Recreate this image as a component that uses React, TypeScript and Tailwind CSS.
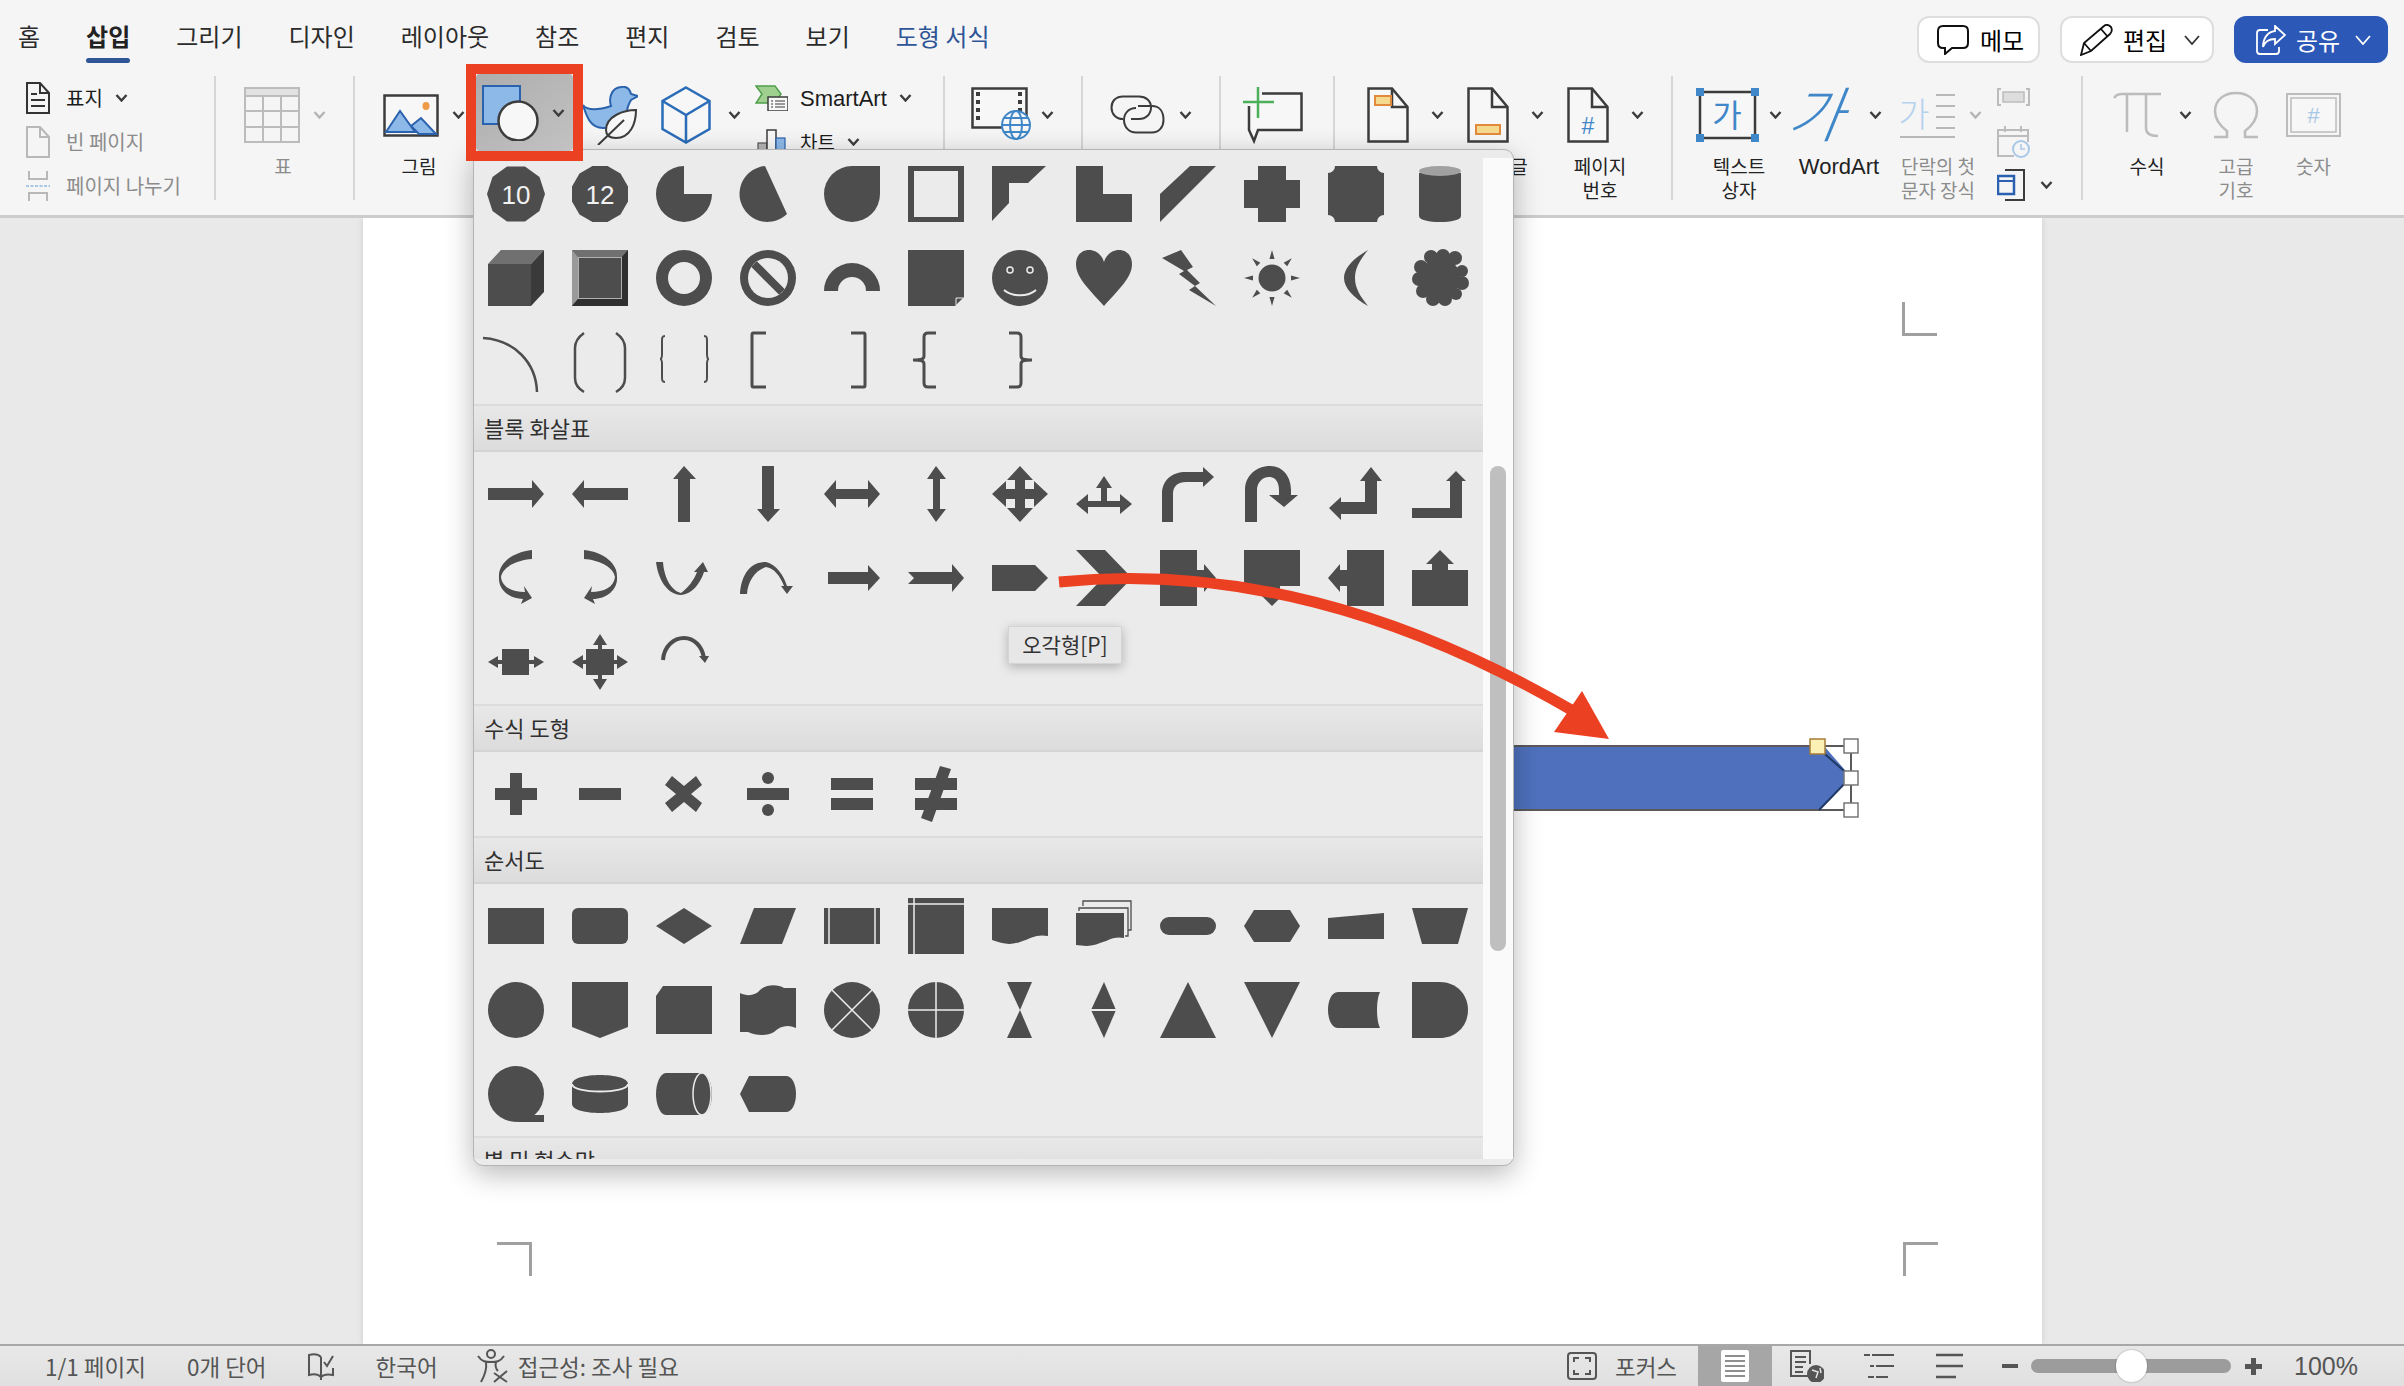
import React from "react";

const BG = "#ebebeb";

const ngon = (n: number) =>
  Array.from({ length: n }, (_, i) => {
    const a = ((i * 360) / n - 90 + 180 / n) * (Math.PI / 180);
    return `${(28 + 29 * Math.cos(a)).toFixed(1)},${(28 + 29 * Math.sin(a)).toFixed(1)}`;
  }).join(" ");

const P = ({ d }: { d: string }) => <path d={d} />;
const S = ({ d, w = 2.5 }: { d: string; w?: number }) => (
  <path d={d} fill="none" stroke="#4d4d4d" strokeWidth={w} />
);
const Num = ({ n, t }: { n: number; t: string }) => (
  <>
    <polygon points={ngon(n)} />
    <text x="28" y="38" textAnchor="middle" fontSize="26" fill="#f2f2f2" fontFamily="'Liberation Sans',sans-serif">
      {t}
    </text>
  </>
);

const basicShapes: React.ReactNode[] = [
  <Num n={10} t="10" />,
  <Num n={12} t="12" />,
  <P d="M28 0A28 28 0 1 0 56 28H28Z" />,
  <P d="M25 0A28 28 0 1 0 47 48Z" />,
  <P d="M28 0H56V28A28 28 0 1 1 28 0Z" />,
  <path fillRule="evenodd" d="M0 0H56V56H0ZM6 5V51H50V5Z" />,
  <P d="M0 0H54L36 17H17V37L0 55Z" />,
  <P d="M0 0H27V28H56V56H0Z" />,
  <P d="M30 0H56L0 56V28Z" />,
  <P d="M14 0H42V14H56V42H42V56H14V42H0V14H14Z" />,
  <P d="M7 0H49A7 7 0 0 0 56 7V49A7 7 0 0 0 49 56H7A7 7 0 0 0 0 49V7A7 7 0 0 0 7 0Z" />,
  <>
    <P d="M7 7V50C7 58 49 58 49 50V7Z" />
    <ellipse cx="28" cy="5" rx="21" ry="5" fill="#a0a0a0" />
  </>,

  <>
    <path d="M0 14H43V56H0Z" />
    <path d="M0 14L13 0H56L43 14Z" fill="#707070" />
    <path d="M43 14L56 0V42L43 56Z" fill="#3a3a3a" />
  </>,
  <>
    <rect width="56" height="56" />
    <path d="M0 0H56L50 7H6Z" fill="#707070" />
    <path d="M0 0L6 7V49L0 56Z" fill="#9a9a9a" />
    <path d="M56 0L50 7V49L56 56Z" fill="#2f2f2f" />
    <path d="M0 56L6 49H50L56 56Z" fill="#2f2f2f" />
    <rect x="6.5" y="7.5" width="43" height="41" fill="none" stroke="#b0b0b0" />
  </>,
  <path fillRule="evenodd" d="M0 28A28 28 0 1 1 56 28A28 28 0 1 1 0 28ZM12 28A16 16 0 1 0 44 28A16 16 0 1 0 12 28Z" />,
  <>
    <circle cx="28" cy="28" r="28" />
    <circle cx="28" cy="28" r="20" fill={BG} />
    <path d="M14 14L42 42" stroke="#4d4d4d" strokeWidth="8" />
  </>,
  <P d="M0 41A28 28 0 0 1 56 41H42A14 14 0 0 0 14 41Z" />,
  <>
    <path d="M0 0H56V47L47 56H0Z" />
    <path d="M48 55V48H55" fill="none" stroke={BG} strokeWidth="1" />
  </>,
  <>
    <circle cx="28" cy="28" r="28" />
    <circle cx="18" cy="20" r="3" fill="none" stroke={BG} strokeWidth="1.5" />
    <circle cx="38" cy="20" r="3" fill="none" stroke={BG} strokeWidth="1.5" />
    <path d="M12 40C20 47 36 47 44 40" fill="none" stroke={BG} strokeWidth="2" />
  </>,
  <P d="M28 56C14 40 0 28 0 14C0 5 6 0 13 0C20 0 26 5 28 12C30 5 36 0 43 0C50 0 56 5 56 14C56 28 42 40 28 56Z" />,
  <P d="M21 0L33 17L27 20L40 33L35 36L56 56L29 40L35 36L19 24L24 21L2 8Z" />,
  <>
    <circle cx="28" cy="28" r="13.5" />
    {Array.from({ length: 8 }, (_, i) => (
      <path key={i} d="M25.5 9L28 0L30.5 9Z" transform={`rotate(${i * 45} 28 28)`} />
    ))}
  </>,
  <P d="M40 0C26 8 16 18 16 28C16 38 26 48 40 56C32 46 27 38 27 28C27 18 32 10 40 0Z" />,
  <>
    {[
      [19, 7, 7],
      [31, 6, 7],
      [43, 8, 7],
      [50, 21, 6],
      [50, 33, 7],
      [44, 44, 6],
      [33, 49, 7],
      [21, 49, 7],
      [11, 41, 7],
      [7, 29, 7],
      [9, 17, 7],
      [28, 28, 20],
    ].map(([x, y, r], i) => (
      <circle key={i} cx={x} cy={y} r={r} />
    ))}
  </>,

  <S d="M-5 4C26 6 48 28 49 58" w={2.5} />,
  <S d="M12 -1C5 4 3 10 3 14V44C3 48 5 54 12 58M44 -1C51 4 53 10 53 14V44C53 48 51 54 44 58" />,
  <S d="M9 2C6 2 6 4 6 7V20C6 24 5 25 4 25C5 25 6 26 6 30V43C6 46 6 48 9 48M48 2C51 2 51 4 51 7V20C51 24 52 25 53 25C52 25 51 26 51 30V43C51 46 51 48 48 48" w={2} />,
  <S d="M26 -1H13C12 -1 12 0 12 1V51C12 52 12 53 13 53H26" w={3} />,
  <S d="M27 -1H40C41 -1 41 0 41 1V51C41 52 41 53 40 53H27" w={3} />,
  <S d="M28 -1H20C17 -1 16 1 16 3V22C16 25 14 26 5 26C14 26 16 27 16 30V49C16 51 17 53 20 53H28" w={3} />,
  <S d="M17 -1H25C28 -1 29 1 29 3V22C29 25 31 26 40 26C31 26 29 27 29 30V49C29 51 28 53 25 53H17" w={3} />,
];

const bulge = "M44 0V9C30 10 15 16 13 27C14 37 24 42 37 42L36 36L44 48L33 54L35 49C22 49 10 40 11 27C10 14 24 2 44 0Z";

const arrowShapes: React.ReactNode[] = [
  <P d="M0 22H44V14L56 28L44 42V34H0Z" />,
  <P d="M56 22H12V14L0 28L12 42V34H56Z" />,
  <P d="M22 56V13H17L28 0L40 13H34V56Z" />,
  <P d="M22 0H34V43H40L28 56L17 43H22Z" />,
  <P d="M0 28L12 14V23H44V14L56 28L44 42V33H12V42Z" />,
  <P d="M28 0L38 13H32V43H38L28 56L19 43H25V13H19Z" />,
  <P d="M28 0L41 14H33V23H42V15L56 28L42 41V33H33V42H41L28 56L15 42H23V33H14V41L0 28L14 15V23H23V14H15Z" />,
  <P d="M28 10L36 22H31V35H44V28L56 38L44 48V41H12V48L0 38L12 28V35H25V22H20Z" />,
  <P d="M2 56V28C2 14 12 6 26 6H43V1L54 11L43 21V16H26C18 16 13 20 13 28V56Z" />,
  <P d="M1 56V24C1 10 12 0 26 0C40 0 47 12 47 24V29H54L40 41L25 29H35V24C35 17 32 11 25 11C18 11 13 17 13 24V56Z" />,
  <P d="M43 1L54 15H49V48H13V54L1 42L13 31V36H37V15H32Z" />,
  <P d="M0 42H38V15H34L44 5L54 15H50V52H0Z" />,

  <P d={bulge} />,
  <g transform="matrix(-1 0 0 1 56 0)">
    <P d={bulge} />
  </g>,
  <P d="M0 12H7C8 26 14 40 25 43C32 38 38 30 41 22H38L47 12L52 22H48C44 34 36 44 25 45C10 44 2 28 0 12Z" />,
  <P d="M0 44C1 28 8 12 26 12C36 14 44 26 47 36H53L47 44L41 36H44C40 26 34 18 26 17C16 20 8 30 7 44Z" />,
  <P d="M4 22H44V15L56 28L44 41V34H4Z" />,
  <P d="M0 22H44V14L56 28L44 42V34H0L6 28Z" />,
  <P d="M0 15H43L56 28L43 41H0Z" />,
  <P d="M0 0H29L56 28L29 56H0L27 28Z" />,
  <P d="M0 0H37V20H44V14L56 28L44 42V36H37V56H0Z" />,
  <P d="M0 0H56V36H36V42H42L28 56L14 42H20V36H0Z" />,
  <P d="M56 0V56H19V36H12V42L0 28L12 14V20H19V0Z" />,
  <P d="M0 56V20H20V14H14L28 0L42 14H36V20H56V56Z" />,

  <P d="M14 15H41V26H46V22L56 28L46 34V30H41V41H14V30H10V34L0 28L10 22V26H14Z" />,
  <>
    <rect x="14" y="15" width="28" height="26" />
    {[0, 90, 180, 270].map((r) => (
      <path key={r} d="M28 0L35 11H30V15H26V11H21Z" transform={`rotate(${r} 28 28)`} />
    ))}
  </>,
  <>
    <S d="M7 26C8 12 18 4 28 4C38 4 46 12 48 24" w={4} />
    <path d="M43 22H53L49 29Z" />
  </>,
];

const mathShapes: React.ReactNode[] = [
  <P d="M22 7H34V22H49V34H34V49H22V34H7V22H22Z" />,
  <P d="M7 22H49V34H7Z" />,
  <P d="M9 19L16 10L28 20L40 10L46 19L35 28L46 37L40 46L28 36L16 46L9 37L20 28Z" />,
  <>
    <rect x="7" y="22" width="42" height="12" />
    <ellipse cx="28" cy="12" rx="6" ry="6" />
    <ellipse cx="28" cy="44" rx="6" ry="6" />
  </>,
  <P d="M7 12H49V24H7ZM7 32H49V44H7Z" />,
  <P d="M7 12H49V24H7ZM7 32H49V44H7ZM32 0L43 3L24 56L13 52Z" />,
];

const flowShapes: React.ReactNode[] = [
  <rect y="10" width="56" height="36" />,
  <rect y="10" width="56" height="36" rx="6" />,
  <P d="M28 10L56 28L28 46L0 28Z" />,
  <P d="M14 10H56L42 46H0Z" />,
  <>
    <rect y="10" width="56" height="36" />
    <path d="M5 10V46M51 10V46" stroke={BG} strokeWidth="1.5" />
  </>,
  <>
    <rect width="56" height="56" />
    <path d="M6 0V56M0 6H56" stroke={BG} strokeWidth="1.5" />
  </>,
  <P d="M0 10H56V38C44 36 40 40 28 44C16 48 10 45 0 42Z" />,
  <>
    <P d="M0 15H48V40C38 38 34 42 24 45C14 49 8 48 0 47Z" />
    <S d="M3 13V10H52V38H49M7 8V3H55V32H52" w={1.3} />
  </>,
  <rect y="19" width="56" height="18" rx="9" />,
  <P d="M10 12H46L56 28L46 44H10L0 28Z" />,
  <P d="M0 20L56 15V41H0Z" />,
  <P d="M0 10H56L46 46H10Z" />,

  <circle cx="28" cy="28" r="28" />,
  <P d="M0 0H56V45L28 56L0 45Z" />,
  <P d="M7 4H56V52H0V14Z" />,
  <P d="M0 11C8 15 16 13 20 8C26 2 38 2 44 6L56 6V46C48 42 40 44 34 50C28 54 16 54 8 50L0 50Z" />,
  <>
    <circle cx="28" cy="28" r="28" />
    <path d="M8 8L48 48M48 8L8 48" stroke={BG} strokeWidth="1.5" />
  </>,
  <>
    <circle cx="28" cy="28" r="28" />
    <path d="M28 0V56M0 28H56" stroke={BG} strokeWidth="1.5" />
  </>,
  <P d="M15 0H40L28 28L40 56H15L28 28Z" />,
  <>
    <path d="M28 0L40 28L28 56L15 28Z" />
    <rect x="12" y="27" width="32" height="2" fill={BG} />
  </>,
  <P d="M28 0L56 56H0Z" />,
  <P d="M0 0H56L28 56Z" />,
  <P d="M10 10H52C48 18 48 38 52 46H10C3 46 0 36 0 28C0 20 3 10 10 10Z" />,
  <P d="M0 0H28C44 0 56 12 56 28C56 44 44 56 28 56H0Z" />,

  <>
    <circle cx="28" cy="28" r="28" />
    <rect x="30" y="49" width="26" height="7" />
  </>,
  <>
    <P d="M0 18C0 6 56 6 56 18V38C56 50 0 50 0 38Z" />
    <path d="M0 18C0 28 56 28 56 18" fill="none" stroke={BG} strokeWidth="2" />
  </>,
  <>
    <P d="M10 7H46C52 7 56 18 56 28C56 38 52 49 46 49H10C4 49 0 38 0 28C0 18 4 7 10 7Z" />
    <ellipse cx="46" cy="28" rx="9" ry="21" fill="none" stroke={BG} strokeWidth="1.5" />
  </>,
  <P d="M9 10H46C52 10 56 18 56 28C56 38 52 46 46 46H9L0 28Z" />,
];

const ShapeGrid = ({ items }: { items: React.ReactNode[] }) => (
  <div className="grid grid-cols-[repeat(12,84px)] auto-rows-[84px]">
    {items.map((s, i) => (
      <div key={i} className="flex items-center justify-center">
        <svg viewBox="0 0 56 56" fill="#4d4d4d" className="h-[56px] w-[56px] overflow-visible">
          {s}
        </svg>
      </div>
    ))}
  </div>
);

const SectionHead = ({ title }: { title: string }) => (
  <div className="flex h-[48px] items-center border-y-2 border-t-[#dcdcdc] border-b-[#d4d4d4] bg-gradient-to-b from-[#e8e8e8] to-[#dcdcdc] pb-[3px] pl-[10px] text-[22px] leading-none text-[#303030]">
    {title}
  </div>
);

const Chevron = ({ className = "", color = "#3c3c3c" }: { className?: string; color?: string }) => (
  <svg viewBox="0 0 13 8" className={`h-[8px] w-[13px] shrink-0 ${className}`} fill="none" stroke={color} strokeWidth="2.4">
    <path d="M1.5 1L6.5 6.5L11.5 1" />
  </svg>
);

const ThinChevron = ({ className = "", color = "#333333" }: { className?: string; color?: string }) => (
  <svg viewBox="0 0 16 10" className={`h-[10px] w-[16px] shrink-0 ${className}`} fill="none" stroke={color} strokeWidth="1.8">
    <path d="M1 1L8 9L15 1" />
  </svg>
);

const Sep = () => <div className="mt-[11px] h-[124px] w-[2px] shrink-0 bg-[#d6d6d6]" />;

const Tool = ({
  className = "",
  lines = [],
  muted = false,
  latin = false,
  children,
}: {
  className?: string;
  lines?: string[];
  muted?: boolean;
  latin?: boolean;
  children: React.ReactNode;
}) => (
  <div className={`shrink-0 pt-[10px] ${className}`}>
    <div className="flex h-[80px] items-center">{children}</div>
    <div
      className={`whitespace-nowrap text-center leading-[24px] ${latin ? "font-['Liberation_Sans',sans-serif] text-[22px]" : "-mt-[1px] text-[19px]"} ${muted ? "text-[#8c8c8c]" : "text-[#222222]"}`}
    >
      {lines.map((l) => (
        <div key={l}>{l}</div>
      ))}
    </div>
  </div>
);

const ListRow = ({ icon, label, muted, chevron }: { icon: React.ReactNode; label: string; muted?: boolean; chevron?: boolean }) => (
  <div className="flex h-[44px] items-center pl-[26px]">
    <div className="w-[24px]">{icon}</div>
    <span className={`ml-[16px] text-[20px] ${muted ? "text-[#8c8c8c]" : "text-[#1c1c1c]"}`}>{label}</span>
    {chevron && <Chevron className="ml-[12px]" />}
  </div>
);

const Tabs = ["홈", "삽입", "그리기", "디자인", "레이아웃", "참조", "편지", "검토", "보기", "도형 서식"];

const TopBar = () => (
  <div className="flex h-[65px] shrink-0">
    <div className="flex gap-[46px] pl-[18px]">
      {Tabs.map((t) => (
        <div key={t} className="pt-[20px]">
          <div
            className={`whitespace-nowrap text-[24px] leading-[32px] ${t === "삽입" ? "font-bold text-[#222222]" : t === "도형 서식" ? "text-[#2f5597]" : "text-[#2b2b2b]"}`}
          >
            {t}
          </div>
          {t === "삽입" && <div className="mt-[6px] h-[5px] rounded-full bg-[#2f5597]" />}
        </div>
      ))}
    </div>
    <div className="ml-auto flex items-start gap-[20px] pr-[16px] pt-[16px] text-[24px] leading-none">
      <div className="flex h-[47px] w-[123px] items-center rounded-[12px] border-2 border-[#dedede] bg-white pl-[18px] text-black">
        <svg viewBox="0 0 32 30" className="h-[30px] w-[32px]" fill="none" stroke="#111" strokeWidth="2">
          <path d="M6 1H26C29 1 31 3 31 6V18C31 21 29 23 26 23H15L8 29V23H6C3 23 1 21 1 18V6C1 3 3 1 6 1Z" />
        </svg>
        <span className="ml-[11px]">메모</span>
      </div>
      <div className="flex h-[47px] w-[154px] items-center rounded-[12px] border-2 border-[#dedede] bg-white pl-[18px] text-black">
        <svg viewBox="0 0 33 32" className="h-[32px] w-[33px]" fill="none" stroke="#111" strokeWidth="1.8">
          <path d="M1 31L4 19L24 2C26 0 29 1 31 3C32 5 32 8 30 10L11 27ZM4 19L11 27M21 5L28 13" />
        </svg>
        <span className="ml-[10px]">편집</span>
        <ThinChevron className="ml-[17px]" />
      </div>
      <div className="flex h-[47px] w-[154px] items-center rounded-[12px] bg-[#2c58b7] pl-[22px] text-white">
        <svg viewBox="0 0 30 30" className="h-[30px] w-[30px]" fill="none" stroke="#fff" strokeWidth="1.8">
          <path d="M12 5H4C2 5 1 6 1 8V26C1 28 2 29 4 29H20C22 29 23 28 23 26V22M19 1L29 10L19 19V14C13 14 9 16 7 22C7 14 11 7 19 6Z" />
        </svg>
        <span className="ml-[10px]">공유</span>
        <ThinChevron className="ml-[15px]" color="#ffffff" />
      </div>
    </div>
  </div>
);

const DocIcon = ({ stroke = "#3c3c3c", children }: { stroke?: string; children?: React.ReactNode }) => (
  <svg viewBox="0 0 42 56" className="h-[56px] w-[42px] shrink-0" fill="#f7f7f7" stroke={stroke} strokeWidth="2.5">
    <path d="M1.5 1.5H25L40.5 20V54.5H1.5Z" />
    <path d="M25 1.5V20H40.5" fill="none" />
    {children}
  </svg>
);

const Ribbon = () => (
  <div className="flex h-[153px] shrink-0 border-b-[3px] border-[#cccccc]">
    {/* Pages */}
    <div className="w-[214px] shrink-0 pt-[11px]">
      <ListRow
        chevron
        label="표지"
        icon={
          <svg viewBox="0 0 24 32" className="h-[32px] w-[24px]" fill="none" stroke="#333" strokeWidth="2">
            <path d="M1 1H14L23 11V31H1ZM14 1V11H23M5 12H11M5 18H19M5 24H19" />
          </svg>
        }
      />
      <ListRow
        muted
        label="빈 페이지"
        icon={
          <svg viewBox="0 0 24 32" className="h-[32px] w-[24px]" fill="none" stroke="#b8b8b8" strokeWidth="2">
            <path d="M1 1H14L23 11V31H1ZM14 1V11H23" />
          </svg>
        }
      />
      <ListRow
        muted
        label="페이지 나누기"
        icon={
          <svg viewBox="0 0 24 30" className="h-[30px] w-[24px]" fill="none" stroke="#b8b8b8" strokeWidth="2">
            <path d="M3 0V8H21V0M3 30V22H21V30" />
            <path d="M0 15H24" stroke="#a9c8e8" strokeDasharray="3 1.5" />
          </svg>
        }
      />
    </div>
    <Sep />
    {/* Table */}
    <div className="w-[137px] shrink-0">
      <Tool className="ml-[28px] w-[78px]" lines={["표"]} muted>
        <svg viewBox="0 0 56 56" className="h-[56px] w-[56px] shrink-0" fill="none" stroke="#bcbcbc" strokeWidth="2">
          <rect x="1" y="1" width="54" height="54" />
          <rect x="1" y="1" width="54" height="8" fill="#e2e2e2" />
          <path d="M1 24H55M1 40H55M19 9V55M37 9V55" />
        </svg>
        <Chevron className="ml-[13px]" color="#b5b5b5" />
      </Tool>
    </div>
    <Sep />
    {/* Illustrations */}
    <div className="flex w-[588px] shrink-0">
      <Tool className="ml-[20px] w-[88px]" lines={["그림"]}>
        <svg viewBox="0 0 56 43" className="ml-[8px] h-[43px] w-[56px] shrink-0">
          <rect x="1.5" y="1.5" width="53" height="40" fill="#f7f7f7" stroke="#3c3c3c" strokeWidth="2.5" />
          <path d="M3 38L17 17L32 38ZM28 32L38 24L53 40H36Z" fill="#8db9e8" stroke="#2b62ad" strokeWidth="2" />
          <ellipse cx="43" cy="12" rx="3.5" ry="4" fill="#ee9a45" />
        </svg>
        <Chevron className="ml-[13px]" />
      </Tool>
      <Tool className="ml-[19px]">
        <div className="h-[56px] w-[57px] shrink-0" />
        <div className="ml-[13px] w-[13px]" />
      </Tool>
      <Tool className="ml-[18px]">
        <svg viewBox="0 0 55 59" className="h-[59px] w-[55px] shrink-0">
          <path
            d="M28 20C26 14 27 2 38 1C44 0 47 4 48 8L55 10L48 14C46 18 44 20 44 26C44 36 34 42 20 42C8 42 4 32 0 19C4 25 16 24 28 20Z"
            fill="#8db9e8"
            stroke="#2b62ad"
            strokeWidth="2"
          />
          <path d="M53 24C41 24 23 30 23 44C23 50 27 52 33 52C47 52 53 38 53 24Z" fill="#f7f7f7" stroke="#3c3c3c" strokeWidth="2" />
          <path d="M15 59L41 34" stroke="#3c3c3c" strokeWidth="2" />
        </svg>
      </Tool>
      <Tool className="ml-[23px]">
        <svg viewBox="0 0 50 58" className="h-[58px] w-[50px] shrink-0" fill="#f7f7f7" stroke="#2b6cb8" strokeWidth="2.5">
          <path d="M25 1.5L48.5 15V43L25 56.5L1.5 43V15Z" />
          <path d="M1.5 15L25 29L48.5 15M25 29V56.5" fill="none" />
        </svg>
        <Chevron className="ml-[17px]" />
      </Tool>
      <div className="ml-[14px] shrink-0 pt-[11px]">
        <div className="flex h-[44px] items-center">
          <svg viewBox="0 0 33 26" className="h-[26px] w-[33px] shrink-0">
            <path d="M1 1H20L26 9L20 18H1L7 9Z" fill="#9fd08f" stroke="#4f9e4a" strokeWidth="1.5" />
            <rect x="13" y="12" width="20" height="14" fill="#f7f7f7" stroke="#3c3c3c" strokeWidth="1.5" />
            <path d="M16 16H18M20 16H30M16 19H18M20 19H30M16 22H18M20 22H30" stroke="#3c3c3c" strokeWidth="1.2" />
          </svg>
          <span className="ml-[12px] font-['Liberation_Sans',sans-serif] text-[22px] text-[#1c1c1c]">SmartArt</span>
          <Chevron className="ml-[12px]" />
        </div>
        <div className="flex h-[44px] items-center">
          <svg viewBox="0 0 29 26" className="ml-[2px] h-[26px] w-[29px] shrink-0">
            <rect x="1" y="14" width="9" height="12" fill="#b5b5b5" stroke="#555" strokeWidth="1.2" />
            <rect x="10" y="1" width="9" height="25" fill="#f7f7f7" stroke="#3c3c3c" strokeWidth="1.5" />
            <rect x="19" y="9" width="9" height="17" fill="#8db9e8" stroke="#2b62ad" strokeWidth="1.2" />
          </svg>
          <span className="ml-[14px] text-[19px] text-[#1c1c1c]">차트</span>
          <Chevron className="ml-[12px]" />
        </div>
      </div>
    </div>
    <Sep />
    {/* Media */}
    <div className="flex w-[136px] shrink-0">
      <Tool className="ml-[26px]">
        <svg viewBox="0 0 60 56" className="h-[56px] w-[60px] shrink-0">
          <rect x="1.5" y="1.5" width="54" height="39" fill="#f7f7f7" stroke="#3c3c3c" strokeWidth="2.5" />
          <path d="M7 5V37M49 5V37" stroke="#3c3c3c" strokeWidth="4" strokeDasharray="4 4" />
          <circle cx="45" cy="38" r="14" fill="#f7f7f7" stroke="#3f87c8" strokeWidth="2" />
          <ellipse cx="45" cy="38" rx="6" ry="14" fill="none" stroke="#3f87c8" strokeWidth="2" />
          <path d="M31 38H59M33 31H57M33 45H57" stroke="#3f87c8" strokeWidth="2" />
        </svg>
        <Chevron className="ml-[9.5px]" />
      </Tool>
    </div>
    <Sep />
    {/* Links */}
    <div className="flex w-[136px] shrink-0">
      <Tool className="ml-[27px]">
        <svg viewBox="0 0 55 40" className="h-[40px] w-[55px] shrink-0" fill="none" stroke="#3c3c3c" strokeWidth="2">
          <path d="M13 24C6 24 1.5 19 1.5 12.5C1.5 6 6 1.5 13 1.5H29C36 1.5 41 6 41 12.5C41 19 36 24 29 24H21" />
          <path d="M28 12H42C49 12 53.5 17 53.5 26C53.5 33 49 38.5 42 38.5H26C19 38.5 14 33 14 26C14 19 19 14 26 14" transform="translate(0 -1)" />
        </svg>
        <Chevron className="ml-[13.5px]" />
      </Tool>
    </div>
    <Sep />
    {/* Comment */}
    <div className="flex w-[112px] shrink-0">
      <Tool className="ml-[22px]">
        <svg viewBox="0 0 60 57" className="h-[57px] w-[60px] shrink-0">
          <path d="M6 6.5H58.5V43H15L11 54L6 43Z" fill="#f7f7f7" />
          <path d="M19 6.5H58.5V43H15L11 54L6 43V19" fill="none" stroke="#3c3c3c" strokeWidth="2.5" />
          <path d="M15 0V31M0 15H31" stroke="#4caf5a" strokeWidth="2.5" />
        </svg>
      </Tool>
    </div>
    <Sep />
    {/* Header and footer */}
    <div className="flex w-[336px] shrink-0">
      <Tool className="ml-[32px] w-[77px]" lines={["머리글"]}>
        <DocIcon>
          <rect x="8" y="9" width="16" height="9" fill="#f4d98f" stroke="#e28a3c" strokeWidth="2" />
        </DocIcon>
        <Chevron className="ml-[21.5px]" />
      </Tool>
      <Tool className="ml-[15px] w-[85px]" lines={["바닥글"]}>
        <div className="ml-[8px]">
          <DocIcon>
            <rect x="9" y="38" width="24" height="9" fill="#f4d98f" stroke="#e28a3c" strokeWidth="2" />
          </DocIcon>
        </div>
        <Chevron className="ml-[21.5px]" />
      </Tool>
      <Tool className="ml-[16px] w-[80px]" lines={["페이지", "번호"]}>
        <div className="ml-[7px]">
          <DocIcon>
            <text x="21" y="47" textAnchor="middle" fontSize="23" fill="#3f87c8" stroke="none" fontFamily="'Liberation Sans',sans-serif">
              #
            </text>
          </DocIcon>
        </div>
        <Chevron className="ml-[21.5px]" />
      </Tool>
    </div>
    <Sep />
    {/* Text */}
    <div className="flex w-[408px] shrink-0">
      <Tool className="ml-[23px] w-[86px]" lines={["텍스트", "상자"]}>
        <svg viewBox="0 0 63 54" className="h-[54px] w-[63px] shrink-0">
          <rect x="4" y="4" width="55" height="46" fill="#f7f7f7" stroke="#3c3c3c" strokeWidth="2.5" />
          <text x="31" y="39" textAnchor="middle" fontSize="32" fill="#3f87c8">
            가
          </text>
          <path d="M0 0H8V8H0ZM55 0H63V8H55ZM0 46H8V54H0ZM55 46H63V54H55Z" fill="#3f87c8" />
        </svg>
        <Chevron className="ml-[9.5px]" />
      </Tool>
      <Tool className="ml-[16px] w-[82px]" lines={["WordArt"]} latin>
        <svg viewBox="0 0 51 56" className="ml-[5px] h-[56px] w-[51px] shrink-0 overflow-visible">
          <text x="16" y="50" textAnchor="middle" fontSize="60" fontWeight="300" fill="#3f87c8" transform="skewX(-22) translate(14 0)">
            가
          </text>
        </svg>
        <Chevron className="ml-[14.5px]" />
      </Tool>
      <Tool className="ml-[14px] w-[88px]" lines={["단락의 첫", "문자 장식"]} muted>
        <svg viewBox="0 0 56 48" className="ml-[5px] h-[48px] w-[56px] shrink-0 overflow-visible">
          <text x="15" y="36" textAnchor="middle" fontSize="34" fontWeight="300" fill="#b5d2ee">
            가
          </text>
          <path d="M37 4H56M37 15H56M37 26H56M37 37H56M1 46H56" stroke="#b8b8b8" strokeWidth="2" />
        </svg>
        <Chevron className="ml-[13.5px]" color="#b5b5b5" />
      </Tool>
      <div className="ml-[15px] shrink-0 pt-[10px]">
        <div className="flex h-[44px] items-center">
          <svg viewBox="0 0 33 18" className="h-[18px] w-[33px]">
            <path d="M4 1H1V17H4M29 1H32V17H29" fill="none" stroke="#bcbcbc" strokeWidth="2" />
            <rect x="6" y="4" width="21" height="10" fill="#dddddd" stroke="#bcbcbc" strokeWidth="1.5" />
          </svg>
        </div>
        <div className="flex h-[44px] items-center">
          <svg viewBox="0 0 33 33" className="h-[33px] w-[33px]" fill="none" stroke="#bcbcbc" strokeWidth="2">
            <path d="M17 31H1V5H31V17M1 11H31M8 1V7M24 1V7" />
            <circle cx="24" cy="24" r="8" fill="#f5f5f5" stroke="#a9c8e8" />
            <path d="M24 19V24H28" stroke="#a9c8e8" strokeWidth="1.5" />
          </svg>
        </div>
        <div className="flex h-[44px] items-center">
          <svg viewBox="0 0 28 32" className="h-[32px] w-[28px] shrink-0">
            <path d="M8 1H27V31H8" fill="none" stroke="#3c3c3c" strokeWidth="2" />
            <rect x="1" y="7" width="16" height="18" fill="#f5f5f5" stroke="#2b5fb0" strokeWidth="2.5" />
            <path d="M1 12H17" stroke="#2b5fb0" strokeWidth="2" />
          </svg>
          <Chevron className="ml-[15px]" />
        </div>
      </div>
    </div>
    <Sep />
    {/* Symbols */}
    <div className="flex shrink-0">
      <Tool className="ml-[20px] w-[88px]" lines={["수식"]}>
        <svg viewBox="0 0 49 46" className="ml-[10px] h-[46px] w-[49px] shrink-0" fill="none" stroke="#bcbcbc" strokeWidth="2.5">
          <path d="M1 6C3 3 5 2 9 2H48M14 2V40M33 2V36C33 42 38 44 45 44" />
        </svg>
        <Chevron className="ml-[16.5px]" />
      </Tool>
      <Tool className="w-[90px]" lines={["고급", "기호"]} muted>
        <svg viewBox="0 0 46 48" className="mx-auto h-[48px] w-[46px] shrink-0" fill="none" stroke="#bcbcbc" strokeWidth="2.5">
          <path d="M1 46H14V40C6 34 2 27 2 20C2 9 11 2 23 2C35 2 44 9 44 20C44 27 40 34 32 40V46H45" />
        </svg>
      </Tool>
      <Tool className="ml-[5px] w-[55px]" lines={["숫자"]} muted>
        <svg viewBox="0 0 55 44" className="h-[44px] w-[55px] shrink-0">
          <rect x="1" y="1" width="53" height="42" fill="none" stroke="#bcbcbc" strokeWidth="2" />
          <rect x="5" y="5" width="45" height="34" fill="#f7f7f7" stroke="#bcbcbc" strokeWidth="1.5" />
          <text x="27.5" y="30" textAnchor="middle" fontSize="22" fill="#a9c8e8" fontFamily="'Liberation Sans',sans-serif">
            #
          </text>
        </svg>
      </Tool>
    </div>
  </div>
);

const StatusBar = () => (
  <div className="flex h-[42px] shrink-0 items-center border-t-2 border-[#a8a8a8] bg-gradient-to-b from-[#e8e8e8] to-[#e0e0e0] text-[22.5px] leading-none text-[#555555]">
    <span className="ml-[45px]">1/1 페이지</span>
    <span className="ml-[41px]">0개 단어</span>
    <svg viewBox="0 0 26 28" className="ml-[41px] h-[28px] w-[26px]" fill="none" stroke="#555" strokeWidth="2">
      <path d="M13 5C10 2 5 2 1 3V23C5 22 10 22 13 25C16 22 20 22 25 23V16M13 5V28M16 10L19 14L25 4" />
    </svg>
    <span className="ml-[42px]">한국어</span>
    <svg viewBox="0 0 32 34" className="ml-[38px] h-[34px] w-[32px]" fill="none" stroke="#555" strokeWidth="2">
      <circle cx="15" cy="5" r="4" />
      <path d="M2 7C6 13 10 13 15 13C20 13 24 13 28 7M10 13C11 20 9 26 5 33M20 13C19 17 20 20 22 22M18 24L31 33M31 22L18 33" />
    </svg>
    <span className="ml-[10px]">접근성: 조사 필요</span>
    <svg viewBox="0 0 30 28" className="ml-auto h-[28px] w-[30px]" fill="none" stroke="#555" strokeWidth="2">
      <rect x="1" y="1" width="28" height="26" rx="3" />
      <path d="M7 10V6H12M18 6H23V10M23 18V22H18M12 22H7V18" />
    </svg>
    <span className="ml-[18px]">포커스</span>
    <div className="ml-[21px] flex h-full w-[74px] items-center justify-center bg-[#a6a6a6]">
      <svg viewBox="0 0 28 32" className="h-[32px] w-[28px]">
        <rect width="28" height="32" rx="2" fill="#ffffff" />
        <path d="M4 6H24M4 11H24M4 16H24M4 21H24M4 26H24" stroke="#8f8f8f" strokeWidth="2" />
      </svg>
    </div>
    <svg viewBox="0 0 34 32" className="ml-[18px] h-[32px] w-[34px]" fill="none" stroke="#555" strokeWidth="2">
      <path d="M20 26H1V1H20V14M5 7H16M5 12H16M5 17H13M5 22H13" />
      <circle cx="26" cy="24" r="8" fill="#555" />
      <path d="M22 20L28 22L26 28M30 18L31 23" stroke="#e4e4e4" strokeWidth="1.5" />
    </svg>
    <svg viewBox="0 0 30 26" className="ml-[40px] h-[26px] w-[30px]" stroke="#555" strokeWidth="2">
      <path d="M0 2H6M8 2H30M6 13H10M12 13H30M4 24H10M12 24H24" />
    </svg>
    <svg viewBox="0 0 27 26" className="ml-[42px] h-[26px] w-[27px]" stroke="#555" strokeWidth="2.5">
      <path d="M0 2H27M0 13H27M0 24H20" />
    </svg>
    <div className="ml-[39px] h-[4px] w-[16px] bg-[#555555]" />
    <div className="relative ml-[13px] h-[14px] w-[200px] rounded-full bg-[#9c9c9c]">
      <div className="absolute left-[85px] top-[-9px] h-[32px] w-[31px] rounded-full bg-white shadow-[0_0_2px_rgba(0,0,0,0.35)]" />
    </div>
    <div className="relative ml-[14px] h-[17px] w-[17px]">
      <div className="absolute left-0 top-[6px] h-[5px] w-[17px] bg-[#555555]" />
      <div className="absolute left-[6px] top-0 h-[17px] w-[5px] bg-[#555555]" />
    </div>
    <span className="ml-[32px] mr-[46px] font-['Liberation_Sans',sans-serif] text-[25px]">100%</span>
  </div>
);

const ShapesMenu = () => (
  <div className="absolute left-[473px] top-[149px] h-[1017px] w-[1041px] rounded-[10px] border border-[#b4b4b4] bg-[#ebebeb] pt-[2px] shadow-[0_8px_28px_rgba(0,0,0,0.28)]">
    <div className="flex h-[1007px]">
      <div className="w-[1009px] shrink-0 overflow-hidden">
        <ShapeGrid items={basicShapes} />
        <SectionHead title="블록 화살표" />
        <ShapeGrid items={arrowShapes} />
        <SectionHead title="수식 도형" />
        <ShapeGrid items={mathShapes} />
        <SectionHead title="순서도" />
        <ShapeGrid items={flowShapes} />
        <SectionHead title="별 및 현수막" />
      </div>
      <div className="mt-[6px] w-[30px] shrink-0 bg-[#fafafa] pl-[7px] pt-[308px]">
        <div className="h-[485px] w-[16px] rounded-full bg-[#bfbfbf]" />
      </div>
    </div>
  </div>
);

export default function App() {
  return (
    <div className="relative flex h-[1386px] w-[2404px] flex-col overflow-hidden bg-[#f5f5f5] font-['Noto_Sans_CJK_KR','Noto_Sans',sans-serif]">
      <TopBar />
      <Ribbon />
      <div className="flex flex-1 justify-center overflow-hidden bg-[#e9e9e9]">
        <div className="relative h-full w-[1679px] bg-white shadow-[0_0_6px_rgba(0,0,0,0.12)]">
          <div className="absolute left-[1539px] top-[84px] h-[34px] w-[35px] border-b-[3px] border-l-[3px] border-[#a0a0a0]" />
          <div className="absolute left-[134px] top-[1024px] h-[34px] w-[35px] border-r-[3px] border-t-[3px] border-[#a0a0a0]" />
          <div className="absolute left-[1540px] top-[1024px] h-[34px] w-[35px] border-l-[3px] border-t-[3px] border-[#a0a0a0]" />
          {/* selected pentagon on the page */}
          <svg viewBox="0 0 500 90" className="absolute left-[1001px] top-[517px] h-[90px] w-[500px] overflow-visible">
            <path d="M0 11H460L487 42L455 75H0Z" fill="#4f71bd" />
            <path d="M0 11H487M0 75H487M487 11V75" fill="none" stroke="#5a5a5a" strokeWidth="2" />
            <path d="M454 13L487 42L455 75" fill="none" stroke="#1f3864" strokeWidth="2" />
            <rect x="446" y="4" width="15" height="15" fill="#fdf0b5" stroke="#a67c3a" strokeWidth="1.5" />
            <rect x="480" y="4" width="14" height="14" fill="#ffffff" stroke="#777777" strokeWidth="1.5" />
            <rect x="480" y="36" width="14" height="14" fill="#ffffff" stroke="#777777" strokeWidth="1.5" />
            <rect x="480" y="68" width="14" height="14" fill="#ffffff" stroke="#777777" strokeWidth="1.5" />
          </svg>
        </div>
      </div>
      <StatusBar />

      <ShapesMenu />

      {/* tooltip */}
      <div className="absolute left-[1008px] top-[626px] flex h-[38px] w-[114px] items-center justify-center border border-[#d4d4d4] bg-[#e7e7e7] pb-[2px] text-[21px] leading-none text-[#333333] shadow-[0_3px_10px_rgba(0,0,0,0.25)]">
        오각형[P]
      </div>

      {/* red highlight box on the shapes button */}
      <div className="absolute left-[466px] top-[64px] h-[97px] w-[117px] border-[10px] border-[#ec4023] bg-[#e8e8e8]">
        <div className="flex h-full items-center rounded-[4px] bg-gradient-to-br from-[#adadad] to-[#c2c2c2] pl-[6px]">
          <svg viewBox="0 0 57 56" className="h-[56px] w-[57px] shrink-0">
            <rect x="1" y="1" width="37" height="38" fill="#8db9e8" stroke="#2b62ad" strokeWidth="2" />
            <circle cx="36" cy="36" r="19.5" fill="#f7f7f7" stroke="#3c3c3c" strokeWidth="2.5" />
          </svg>
          <Chevron className="ml-[13px]" />
        </div>
      </div>

      {/* red annotation arrow */}
      <svg viewBox="0 0 2404 1386" className="pointer-events-none absolute left-0 top-0 h-[1386px] w-[2404px]">
        <path d="M1059 582C1230 565 1400 610 1575 712" fill="none" stroke="#ec4023" strokeWidth="11" />
        <path d="M1582 691L1609 739L1554 732Z" fill="#ec4023" />
      </svg>
    </div>
  );
}
